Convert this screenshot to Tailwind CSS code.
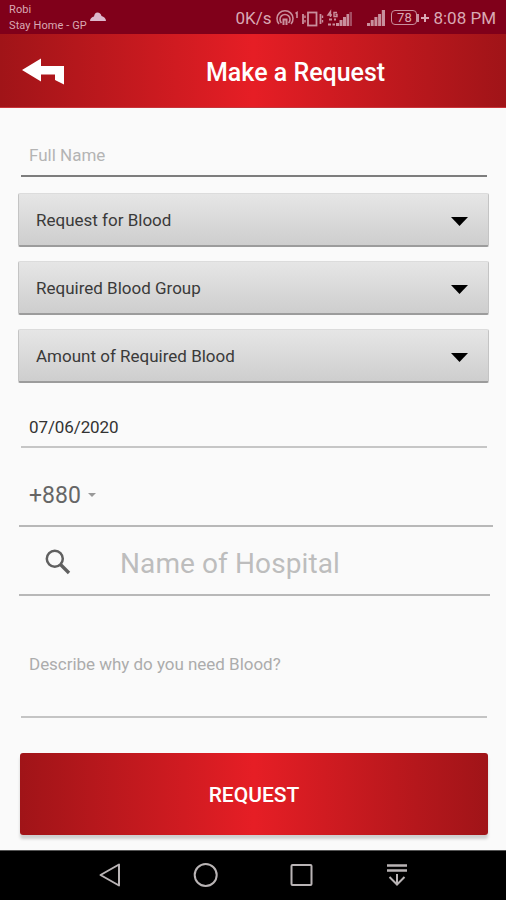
<!DOCTYPE html>
<html lang="en">
<head>
    <meta charset="UTF-8">
    <meta name="viewport" content="width=device-width, initial-scale=1.0">
    <title>Make a Request</title>
    <script src="https://cdn.jsdelivr.net/npm/@tailwindcss/browser@4"></script>
</head>
<body class="bg-[#fafafa] font-['Roboto',sans-serif]">
    <div class="w-[506px] h-[900px] flex flex-col overflow-hidden whitespace-nowrap">

        <!-- Status bar -->
        <div class="h-[34px] shrink-0 bg-[#80001a] text-[#d9a9b4] flex pl-[9px] pr-[10px]">
            <div class="text-[11px] leading-[16px] pt-[2px] tracking-[0.1px]">
                <div>Robi</div>
                <div>Stay Home - GP</div>
            </div>
            <svg class="w-4 h-[9px] mt-[12px] ml-[3px]" viewBox="0 0 16 9" fill="#dcb8cc"><path d="M0 9C0 6.500 2 5 4 4.500C4.500 2 5.500 .5 7.500 .5C9.500 .5 11 2 11.500 4C14 4.500 16 6.500 16 9Z"/></svg>
            <div class="ml-auto flex items-center h-[37px] text-[17px]">
                <span>0K/s</span>
                <svg class="w-[78px] h-5 ml-[5px]" viewBox="0 0 78 20" fill="none" stroke="#c98f9d" stroke-width="1.600">
                    <path d="M3 15A8 8 0 1 1 15 15M5.500 14A5 5 0 1 1 12.500 14"/>
                    <path d="M7.500 16V10.500H10.500V16" stroke-width="2"/>
                    <path d="M19.500 4.500L21 3.500V9"/>
                    <rect x="32" y="3.500" width="8.500" height="13" stroke-width="1.800"/>
                    <path d="M27 5V15M44.500 5V15" stroke-width="1.800"/>
                    <path d="M29 6.500V9M29 11V13.500M46.500 6.500V9M46.500 11V13.500" stroke-width="1.400"/>
                    <path d="M54.500 8V2.500L52 6H56M61 3.500H58V7.500H61V5.500H59.500" stroke-width="1.400"/>
                    <path d="M53 10.500H56M58 10.500H60M52 15.500H55M56.500 15.500H59" stroke-width="2.200"/>
                    <path d="M60 17V14H63V17ZM63.500 17V11H66.500V17ZM67 17V8H70V17ZM70.500 17V5H73V17Z" fill="#c98f9d" stroke="none"/>
                    <path d="M73.500 17V3H76V17Z" fill="#a44c61" stroke="none"/>
                </svg>
                <svg class="w-[18px] h-4 -mt-[2px] ml-[13px]" viewBox="0 0 18 16" fill="#c98f9d"><path d="M0 16V13H3V16ZM3.700 16V10H6.700V16ZM7.400 16V7H10.400V16ZM11.100 16V4H14.100V16ZM14.800 16V0H18V16Z"/></svg>
                <span class="-mt-[2px] ml-[6px] w-[26px] h-[15px] border border-[#c98f9d] rounded-[4px] text-[13px] leading-[13px] text-center">78</span>
                <span class="-mt-[2px] w-[2px] h-2 bg-[#c98f9d]"></span>
                <svg class="w-[8px] h-[8px] -mt-[2px] ml-[2px] mr-[4px]" viewBox="0 0 8 8" stroke="#d9a9b4" stroke-width="2"><path d="M4 0V8M0 4H8"/></svg>
                <span>8:08 PM</span>
            </div>
        </div>

        <!-- App bar -->
        <div class="h-[74px] shrink-0 bg-linear-to-r from-[#a01418] via-[#e61e25] to-[#a01418] border-b border-[#c8343a] flex items-center">
            <svg class="w-[42px] h-[27px] ml-[22px] mt-[1px]" viewBox="0 0 42 27" fill="#fff"><path d="M0 12L19 .5V8H42V26.500L33 22V16.500H19V23.500Z"/></svg>
            <h1 class="ml-[142px] mt-[4px] text-[25px] font-medium text-white">Make a Request</h1>
        </div>

        <!-- Form -->
        <form class="h-[742px] shrink-0 flex flex-col">
            <div class="h-[69px] ml-[21px] mr-[19px] pl-[8px] border-b-2 border-[#7d7d7d] flex items-end pb-[7px] text-[17px] text-[#b4b4b4]">Full Name</div>

            <div class="mt-4 ml-[18px] mr-[17px] flex flex-col gap-[14px] text-[17px] text-[#3a3a3a]">
                <div class="h-[54px] rounded-[2px] bg-linear-to-b from-[#e6e6e6] to-[#cecece] border border-t-[#dcdcdc] border-x-[#c4c4c4] border-b-2 border-b-[#9c9c9c] flex items-center justify-between pt-[3px] pl-[17px] pr-[20px]">
                    <span>Request for Blood</span>
                    <svg class="w-[17px] h-[9px]" viewBox="0 0 17 9"><path d="M0 0H17L8.500 9Z"/></svg>
                </div>
                <div class="h-[54px] rounded-[2px] bg-linear-to-b from-[#e6e6e6] to-[#cecece] border border-t-[#dcdcdc] border-x-[#c4c4c4] border-b-2 border-b-[#9c9c9c] flex items-center justify-between pt-[3px] pl-[17px] pr-[20px]">
                    <span>Required Blood Group</span>
                    <svg class="w-[17px] h-[9px]" viewBox="0 0 17 9"><path d="M0 0H17L8.500 9Z"/></svg>
                </div>
                <div class="h-[54px] rounded-[2px] bg-linear-to-b from-[#e6e6e6] to-[#cecece] border border-t-[#dcdcdc] border-x-[#c4c4c4] border-b-2 border-b-[#9c9c9c] flex items-center justify-between pt-[3px] pl-[17px] pr-[20px]">
                    <span>Amount of Required Blood</span>
                    <svg class="w-[17px] h-[9px]" viewBox="0 0 17 9"><path d="M0 0H17L8.500 9Z"/></svg>
                </div>
            </div>

            <div class="h-[65px] ml-[21px] mr-[19px] pl-[8px] border-b-2 border-[#c6c6c6] flex items-end pb-[6px] text-[17px] tracking-[-0.1px] text-[#333]">07/06/2020</div>

            <div class="h-[79px] ml-[19px] mr-[13px] pl-[10px] border-b-2 border-[#b8b8b8] flex items-center pt-[20px] text-[23px] text-[#666]">
                <span>+880</span>
                <svg class="w-2 h-1 ml-[7px] -mt-[3px]" viewBox="0 0 8 4" fill="#999"><path d="M0 0H8L4 4Z"/></svg>
            </div>

            <div class="h-[69px] ml-[19px] mr-[16px] pt-[4px] border-b-2 border-[#b8b8b8] flex items-center text-[28px] text-[#bdbdbd]">
                <svg class="w-[26px] h-[26px] ml-[26px] -mt-[2px]" viewBox="0 0 26 26" fill="none" stroke="#606060"><circle cx="9.800" cy="9.800" r="8" stroke-width="2.500"/><path d="M15.500 15.500L24 24" stroke-width="3.300"/></svg>
                <span class="ml-[49px] mt-[3px] tracking-[0.1px]">Name of Hospital</span>
            </div>

            <div class="h-[122px] ml-[21px] mr-[19px] pl-[8px] border-b-2 border-[#c4c4c4] flex items-center pt-[18px] text-[17px] tracking-[-0.03px] text-[#acacac]">Describe why do you need Blood?</div>

            <button type="button" class="h-[82px] mt-[35px] ml-[20px] mr-[18px] pt-[3px] rounded-[3px] bg-linear-to-r from-[#a01418] via-[#e61e25] to-[#a01418] shadow-[0_4px_3px_#cfcfcf] text-white text-[21px] font-medium">REQUEST</button>
        </form>

        <!-- Navigation bar -->
        <div class="h-[50px] shrink-0 bg-black border-t border-[#555]">
            <svg class="w-[506px] h-[49px]" viewBox="0 0 506 49" fill="none" stroke="#b9b4b5" stroke-width="2">
                <path d="M100.500 24L119 13.500V34.500Z" stroke-linejoin="round"/>
                <circle cx="205.700" cy="24" r="11"/>
                <rect x="291.500" y="14" width="20" height="20" rx="1"/>
                <path d="M387 14.500H407M387 19.500H407" stroke-width="2.500"/>
                <path d="M397 23V33.500M389.500 26L397 33.500L404.500 26"/>
            </svg>
        </div>
    </div>
</body>
</html>
